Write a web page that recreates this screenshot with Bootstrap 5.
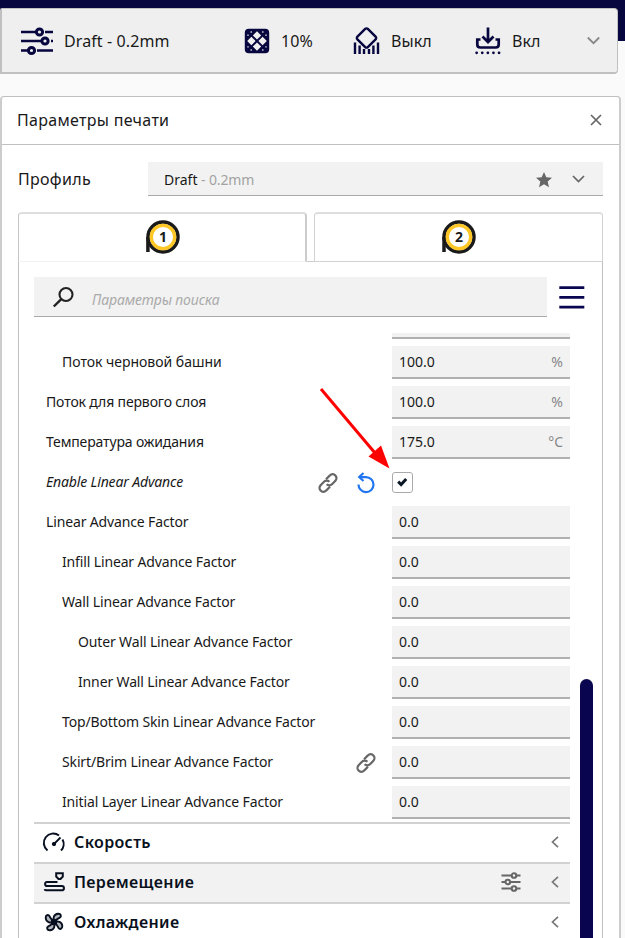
<!DOCTYPE html>
<html lang="ru">
<head>
<meta charset="utf-8">
<meta name="viewport" content="width=device-width, initial-scale=1">
<title>Параметры печати</title>
<link rel="stylesheet" href="https://cdn.jsdelivr.net/npm/bootstrap@5.3.0/dist/css/bootstrap.min.css">
<style>
:root{--navy:#08063f;--line:#c0c0c0;--field:#f2f2f2}
body{font-family:"Noto Sans",sans-serif;font-size:14px;line-height:20px;color:#191919;background:#fafafa;width:625px;height:938px;overflow:hidden}
svg{display:block;flex:none;fill:none;stroke:currentColor;overflow:visible}
.top-strip{height:41px;background:var(--navy);margin-bottom:-33px}
.summary{width:618px;height:66px;margin-bottom:22px;background:#efefef;border:1px solid var(--line);border-left-width:2px;border-bottom-width:2px;border-radius:2px 4px 4px 0;font-size:16px;letter-spacing:.1px;position:relative;padding:0 17px 0 18px}
.navy{color:var(--navy)}
.s-profile{width:224px;gap:10px}.s-infill{width:109px;gap:11px}.s-support{width:122px;gap:11px}.s-adhesion{width:112px;gap:11px}
.panel{width:621px;height:842px;border:1px solid var(--line);border-left:2px solid #ccc;border-right:2px solid #ccc;border-bottom:0;border-radius:4px 4px 0 0;background:#fff}
.panel-head{height:48px;border-bottom:1px solid var(--line);padding:0 17px 2px 15px;font-size:16px;letter-spacing:.3px}
.gray{color:#666}
.profile-row{height:34px;margin:17px 16px 16px;font-size:16px;letter-spacing:.3px}
.profile-select{width:455px;height:34px;background:var(--field);border-bottom:1px solid #aaa;font-size:14px;letter-spacing:0;padding:2px 17px 0 16px}
.muted{color:#a2a2a2;letter-spacing:-.15px}
.tabs{margin:0 16px;gap:7px;height:50px}
.tab-cell{height:50px;background:#fff;border:1px solid #d2d2d2;border-top:2px solid #dedede;border-radius:4px 4px 0 0;padding-bottom:1px}
.tab-on{width:289px;border-bottom-color:#f2f2f2;border-left-color:#c4c4c4;border-right:2px solid #ccc}
.tab-off{width:289px}
.tab-gap{width:7px;margin:0 -7px;border-bottom:1px solid #ccc}
.body-box{margin:0 16px;width:585px;height:676px;border:1px solid var(--line);border-top:0;border-bottom:0;padding:15px 0 0 15px;overflow:hidden}
.search-field{width:513px;height:40px;background:var(--field);border-bottom:1px solid #aaa;padding-left:18px;gap:18px;margin-right:12px}
.ph{color:#aaa;font-style:italic;padding-top:7px;letter-spacing:-.12px}
.list-area{margin-top:16px;height:605px;gap:10px}
.settings{width:536px}
.cut{height:13px;padding-left:358px}
.cut div{height:6px;background:var(--field);border-bottom:2px solid #b0b0b0}
.setting{height:40px}
.setting.last-one{height:36px}
.setting .line{height:33px}
.lbl{padding-left:12px;padding-bottom:2px;flex:1;letter-spacing:-.14px}
.lv1{padding-left:28px}.lv2{padding-left:44px}
.loose{letter-spacing:-.02px}
.value{width:178px;height:33px;background:var(--field);border-bottom:2px solid #b0b0b0;padding:0 7px}
.unit{color:#888}
.tools{gap:18px;margin-right:16px;color:#666}
.check{width:21px;height:21px;border:1px solid #aaa;border-radius:3px;margin:0 157px 1px 0;color:#0c1826}
.category{height:40px;border-top:2px solid #d2d2d2;padding:0 11px 2px 9px;gap:9px;font-size:16px;font-weight:600;letter-spacing:.35px;color:#081020}
.category.hot{background:var(--field)}
.tune{margin-right:21px}
.thumb{width:13px;height:280px;margin-top:346px;border-radius:7px;background:#09064f}
.pointer{position:absolute;left:315px;top:383px}
</style>
</head>
<body>
<div class="top-strip"></div>
<div class="summary d-flex align-items-center">
  <div class="s-profile d-flex align-items-center">
    <svg class="navy" width="34" height="28" viewBox="0 0 34 28" stroke-width="2.6"><path d="M1 5h15M25 5h8M1 14h20M31 14h2M1 23.500h7M17 23.500h16"/><circle cx="19.500" cy="5" r="3.100" stroke-width="3"/><circle cx="25" cy="14" r="3.100" stroke-width="3"/><circle cx="11.500" cy="23.500" r="3.100" stroke-width="3"/></svg>
    <span>Draft - 0.2mm</span>
  </div>
  <div class="s-infill d-flex align-items-center">
    <svg class="navy" width="26" height="26" viewBox="0 0 26 26"><rect x=".8" y=".8" width="24.400" height="24.400" rx="4" fill="currentColor" stroke="none"/><path d="m13 3.200 4.200 4.200L13 11.600 8.800 7.400zM13 14.400l4.200 4.200-4.200 4.200-4.200-4.200zM7.400 8.800l4.200 4.200-4.200 4.200L3.200 13zM18.600 8.800l4.200 4.200-4.200 4.200-4.200-4.200z" fill="#efefef" stroke="none"/><g fill="#a9a8bd" stroke="none"><circle cx="7.200" cy="4" r=".9"/><circle cx="4" cy="7.200" r=".9"/><circle cx="18.800" cy="4" r=".9"/><circle cx="22" cy="7.200" r=".9"/><circle cx="7.200" cy="22" r=".9"/><circle cx="4" cy="18.800" r=".9"/><circle cx="18.800" cy="22" r=".9"/><circle cx="22" cy="18.800" r=".9"/></g></svg>
    <span>10%</span>
  </div>
  <div class="s-support d-flex align-items-center">
    <svg class="navy" width="27" height="28" viewBox="0 0 27 28" stroke-width="2.400"><path d="M12.200 1.900a1.800 1.800 0 0 1 2.600 0l7.800 7.800a1.800 1.800 0 0 1 0 2.600l-7.800 7.800a1.800 1.800 0 0 1-2.600 0l-7.800-7.800a1.800 1.800 0 0 1 0-2.600zM2 15.500V27M6.600 18.500V27M11 22v5M16 22v5M20.400 18.500V27M25 15.500V27"/></svg>
    <span>Выкл</span>
  </div>
  <div class="s-adhesion d-flex align-items-center">
    <svg class="navy" width="26" height="28" viewBox="0 0 26 28" stroke-width="2.700"><path d="M13 .5v14M7.500 9.500l5.500 5.500 5.500-5.500M5.500 12.500H2.300v5q0 3 3 3h15.400q3 0 3-3v-5h-3.200"/><path d="M1.600 25.800h24" stroke-width="2.700" stroke-linecap="round" stroke-dasharray=".1 5.500"/></svg>
    <span>Вкл</span>
  </div>
  <svg class="ms-auto mb-1" width="13" height="10" viewBox="0 0 13 10" stroke-width="1.800" color="#888"><path d="m.8 3.500 5.700 5.700 5.700-5.700"/></svg>
</div>

<div class="panel">
  <div class="panel-head d-flex align-items-center justify-content-between">
    <span>Параметры печати</span>
    <svg class="gray" width="12" height="12" viewBox="0 0 12 12" stroke-width="1.700"><path d="m1 1 10 10M11 1 1 11"/></svg>
  </div>
  <div class="profile-row d-flex align-items-center justify-content-between">
    <span>Профиль</span>
    <div class="profile-select d-flex align-items-center">
      <span>Draft <span class="muted">- 0.2mm</span></span>
      <svg class="ms-auto gray" width="16" height="16" viewBox="0 0 16 16"><path fill="currentColor" stroke="none" d="m8 0 2.300 5.300 5.700.5-4.300 3.800L13 15.300 8 12.300l-5 3 1.300-5.700L0 5.800l5.700-.5z"/></svg>
      <svg class="gray mb-1" width="34" height="10" viewBox="0 0 34 10" stroke-width="1.700"><path d="m21 3 5.500 5.500L32 3"/></svg>
    </div>
  </div>
  <div class="tabs d-flex">
    <div class="tab-cell tab-on d-flex align-items-center justify-content-center">
      <svg width="34" height="34" viewBox="0 0 34 34"><circle cx="18" cy="17" r="15" fill="#fff" stroke="#1a1a1a" stroke-width="3.500"/><path d="M2.900 17v15" stroke="#1a1a1a" stroke-width="3.500"/><circle cx="18" cy="17" r="11.700" stroke="#ffc726" stroke-width="3.300"/><text x="18" y="22" text-anchor="middle" font-size="14" font-weight="700" fill="#1a1a1a" stroke="none">1</text></svg>
    </div>
    <div class="tab-gap"></div>
    <div class="tab-cell tab-off d-flex align-items-center justify-content-center">
      <svg width="34" height="34" viewBox="0 0 34 34"><circle cx="17" cy="17" r="15" fill="#fff" stroke="#1a1a1a" stroke-width="3.500"/><path d="M2 17v15" stroke="#1a1a1a" stroke-width="3.500"/><circle cx="17" cy="17" r="11.700" stroke="#ffc726" stroke-width="3.300"/><text x="17" y="22" text-anchor="middle" font-size="14" font-weight="700" fill="#1a1a1a" stroke="none">2</text></svg>
    </div>
  </div>
  <div class="body-box">
    <div class="d-flex align-items-center">
      <div class="search-field d-flex align-items-center">
        <svg width="22" height="22" viewBox="0 0 22 22" stroke-width="2.100" color="#222"><circle cx="14" cy="8.500" r="6.500"/><path d="m9.300 13.200-7.500 7.300" stroke-width="2.400"/></svg>
        <span class="ph">Параметры поиска</span>
      </div>
      <svg width="26" height="24" viewBox="0 0 26 24" stroke-width="2.800" color="#09064f"><path d="M.3 2.700h25M.3 12.400h25M.3 22.200h25"/></svg>
    </div>
    <div class="list-area d-flex">
      <div class="settings">
        <div class="cut"><div></div></div>
        <div class="setting"><div class="line d-flex align-items-center"><span class="lbl lv1 loose">Поток черновой башни</span><div class="value d-flex align-items-center justify-content-between">100.0<span class="unit">%</span></div></div></div>
        <div class="setting"><div class="line d-flex align-items-center"><span class="lbl">Поток для первого слоя</span><div class="value d-flex align-items-center justify-content-between">100.0<span class="unit">%</span></div></div></div>
        <div class="setting"><div class="line d-flex align-items-center"><span class="lbl">Температура ожидания</span><div class="value d-flex align-items-center justify-content-between">175.0<span class="unit">°C</span></div></div></div>
        <div class="setting"><div class="line d-flex align-items-center"><span class="lbl fst-italic">Enable Linear Advance</span>
          <div class="tools d-flex align-items-center">
            <svg width="20" height="20" viewBox="0 0 20 20" stroke-width="2.200"><path d="M8 6.200 11.900 2.400a3.700 3.700 0 0 1 5.500 0 3.900 3.900 0 0 1 0 5.400L14 11.200a3.800 3.800 0 0 1-5.400 0M12 13.800 8.100 17.600a3.700 3.700 0 0 1-5.500 0 3.900 3.900 0 0 1 0-5.400L6 8.800a3.800 3.800 0 0 1 5.400 0"/></svg>
            <svg width="20" height="22" viewBox="0 0 20 22" stroke-width="2.200" color="#2275f0"><path d="M2.500 12.500a7.500 7.500 0 1 0 7.500-7.400H3.500M7.500 1l-4.300 4 4.300 4"/></svg>
          </div>
          <div class="check d-flex align-items-center justify-content-center"><svg width="11" height="10" viewBox="0 0 11 10" stroke-width="3"><path d="m1.200 4.700 2.900 2.800 5.100-5.500"/></svg></div></div></div>
        <div class="setting"><div class="line d-flex align-items-center"><span class="lbl">Linear Advance Factor</span><div class="value d-flex align-items-center">0.0</div></div></div>
        <div class="setting"><div class="line d-flex align-items-center"><span class="lbl lv1">Infill Linear Advance Factor</span><div class="value d-flex align-items-center">0.0</div></div></div>
        <div class="setting"><div class="line d-flex align-items-center"><span class="lbl lv1">Wall Linear Advance Factor</span><div class="value d-flex align-items-center">0.0</div></div></div>
        <div class="setting"><div class="line d-flex align-items-center"><span class="lbl lv2">Outer Wall Linear Advance Factor</span><div class="value d-flex align-items-center">0.0</div></div></div>
        <div class="setting"><div class="line d-flex align-items-center"><span class="lbl lv2">Inner Wall Linear Advance Factor</span><div class="value d-flex align-items-center">0.0</div></div></div>
        <div class="setting"><div class="line d-flex align-items-center"><span class="lbl lv1">Top/Bottom Skin Linear Advance Factor</span><div class="value d-flex align-items-center">0.0</div></div></div>
        <div class="setting"><div class="line d-flex align-items-center"><span class="lbl lv1">Skirt/Brim Linear Advance Factor</span>
          <div class="tools d-flex"><svg width="20" height="20" viewBox="0 0 20 20" stroke-width="2.200"><path d="M8 6.200 11.900 2.400a3.700 3.700 0 0 1 5.500 0 3.900 3.900 0 0 1 0 5.400L14 11.200a3.800 3.800 0 0 1-5.400 0M12 13.800 8.100 17.600a3.700 3.700 0 0 1-5.500 0 3.900 3.900 0 0 1 0-5.400L6 8.800a3.800 3.800 0 0 1 5.400 0"/></svg></div>
          <div class="value d-flex align-items-center">0.0</div></div></div>
        <div class="setting last-one"><div class="line d-flex align-items-center"><span class="lbl lv1">Initial Layer Linear Advance Factor</span><div class="value d-flex align-items-center">0.0</div></div></div>

        <div class="category d-flex align-items-center">
          <svg width="22" height="20" viewBox="0 0 22 20" stroke-width="2"><path d="M4.500 18.500A9.300 9.300 0 0 1 16 3.500M19.500 7.500A9.300 9.300 0 0 1 18 18.500"/><path d="M17.500 5.500 11 12" stroke-width="1.800"/><circle cx="11" cy="12" r="1.700" fill="currentColor" stroke-width="1"/></svg>
          <span>Скорость</span>
          <svg class="ms-auto" width="8" height="12" viewBox="0 0 8 12" stroke-width="1.700" color="#777"><path d="M7 .8 1.500 6 7 11.200"/></svg>
        </div>
        <div class="category hot d-flex align-items-center">
          <svg width="22" height="20" viewBox="0 0 22 20" stroke-width="2"><path d="M13.200 1.200h6.600v3.300L17.500 7h-2l-2.300-2.500zM14.500 10H4a1.800 1.800 0 0 0-1.900 1.900Q2.100 14 4 14h14.800a2 2 0 0 1 0 4.300H3a1.300 1.300 0 0 1-1.300-1.200"/></svg>
          <span>Перемещение</span>
          <svg class="tune ms-auto" width="20" height="20" viewBox="0 0 20 20" stroke-width="2.100" color="#666"><path d="M.5 3.500H10M15.500 3.500h4M.5 10H4M9.500 10h10M.5 16.500H10M15.500 16.500h4"/><circle cx="13" cy="3.500" r="2.300"/><circle cx="6.800" cy="10" r="2.300"/><circle cx="13" cy="16.500" r="2.300"/></svg>
          <svg width="8" height="12" viewBox="0 0 8 12" stroke-width="1.700" color="#777"><path d="M7 .8 1.500 6 7 11.200"/></svg>
        </div>
        <div class="category d-flex align-items-center">
          <svg width="22" height="20" viewBox="0 0 22 20" stroke-width="1.900"><g id="blade"><path d="M11 10C9.500 6 11 2 15 1.700c3-.2 3.800 2.600 1.700 3.900C14 6.800 13 8 11 10" fill="#081020" fill-opacity=".3"/></g><use href="#blade" transform="rotate(90 11 10)"/><use href="#blade" transform="rotate(180 11 10)"/><use href="#blade" transform="rotate(270 11 10)"/><circle cx="11" cy="10" r="2.400" fill="currentColor"/></svg>
          <span>Охлаждение</span>
          <svg class="ms-auto" width="8" height="12" viewBox="0 0 8 12" stroke-width="1.700" color="#777"><path d="M7 .8 1.500 6 7 11.200"/></svg>
        </div>
      </div>
      <div class="thumb"></div>
    </div>
  </div>
</div>
<svg class="pointer" width="80" height="90" viewBox="0 0 80 90"><path d="m6 6 54 64" stroke="#f00" stroke-width="3"/><path d="M74.500 85.500 53.500 73.500 66 62.500z" fill="#f00" stroke="none"/></svg>
<script src="https://cdn.jsdelivr.net/npm/bootstrap@5.3.0/dist/js/bootstrap.bundle.min.js"></script>
</body>
</html>
